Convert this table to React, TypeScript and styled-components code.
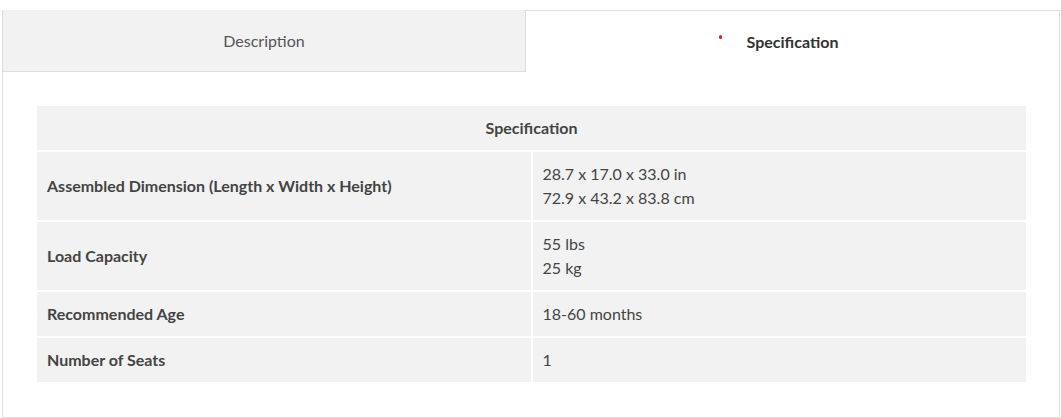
import React from 'react';
import styled, { createGlobalStyle } from 'styled-components';

const GlobalStyle = createGlobalStyle`
  html, body { margin: 0; padding: 0; background: #fff; }
  body { font-family: Lato, 'Open Sans', sans-serif; color: #444; }
`;

interface SpecRow {
  label: string;
  values: string[];
}

const specs: SpecRow[] = [
  { label: 'Assembled Dimension (Length x Width x Height)', values: ['28.7 x 17.0 x 33.0 in', '72.9 x 43.2 x 83.8 cm'] },
  { label: 'Load Capacity', values: ['55 lbs', '25 kg'] },
  { label: 'Recommended Age', values: ['18-60 months'] },
  { label: 'Number of Seats', values: ['1'] },
];

const Wrapper = styled.div`
  margin: 10px 2px 0 2px;
  width: 1058px;
  box-sizing: border-box;
`;

const TabBar = styled.div`
  display: flex;
`;

const Tab = styled.div<{ active?: boolean }>`
  flex: ${({ active }) => (active ? '1' : '0 0 524px')};
  height: 62px;
  box-sizing: border-box;
  display: flex;
  align-items: center;
  justify-content: center;
  font-size: 16px;
  cursor: pointer;
  background: ${({ active }) => (active ? '#fff' : '#f2f2f2')};
  color: ${({ active }) => (active ? '#333' : '#555')};
  font-weight: ${({ active }) => (active ? 700 : 400)};
  border-left: ${({ active }) => (active ? 'none' : '1px solid #ddd')};
  border-right: 1px solid #ddd;
  border-top: ${({ active }) => (active ? '1px solid #ddd' : 'none')};
  border-bottom: ${({ active }) => (active ? 'none' : '1px solid #ddd')};
  padding-bottom: ${({ active }) => (active ? '0' : '1px')};
`;

const TabLabel = styled.span`
  position: relative;
`;

const Dot = styled.span`
  position: absolute;
  left: -28px;
  top: 3px;
  width: 3.5px;
  height: 3.5px;
  border-radius: 50%;
  background: #e31b23;
`;

const Panel = styled.div`
  border: 1px solid #ddd;
  border-top: none;
  padding: 32px 31px 33px 32px;
`;

const Table = styled.table`
  width: 100%;
  border-collapse: separate;
  border-spacing: 2px;
  font-size: 16px;
  color: #444;
  table-layout: fixed;
`;

const HeadCell = styled.th`
  background: #f2f2f2;
  font-weight: 700;
  text-align: center;
  padding: 10px;
  line-height: 24px;
`;

const Cell = styled.td<{ label?: boolean }>`
  width: 50%;
  background: #f2f2f2;
  padding: 10px;
  line-height: 24px;
  vertical-align: middle;
  font-weight: ${({ label }) => (label ? 700 : 400)};
`;

const App: React.FC = () => {
  return (
    <>
      <GlobalStyle />
      <Wrapper>
        <TabBar>
          <Tab>Description</Tab>
          <Tab active>
            <TabLabel>
              <Dot />
              Specification
            </TabLabel>
          </Tab>
        </TabBar>
        <Panel>
          <Table>
            <thead>
              <tr>
                <HeadCell colSpan={2}>Specification</HeadCell>
              </tr>
            </thead>
            <tbody>
              {specs.map((row) => (
                <tr key={row.label}>
                  <Cell label>{row.label}</Cell>
                  <Cell>
                    {row.values.map((v, i) => (
                      <div key={i}>{v}</div>
                    ))}
                  </Cell>
                </tr>
              ))}
            </tbody>
          </Table>
        </Panel>
      </Wrapper>
    </>
  );
};

export default App;
